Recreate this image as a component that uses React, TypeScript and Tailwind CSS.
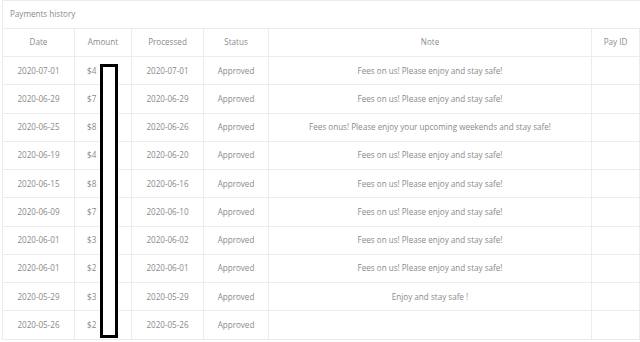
import React from 'react';

const rows = [
  { date: '2020-07-01', amount: '$4', processed: '2020-07-01', note: 'Fees on us! Please enjoy and stay safe!' },
  { date: '2020-06-29', amount: '$7', processed: '2020-06-29', note: 'Fees on us! Please enjoy and stay safe!' },
  { date: '2020-06-25', amount: '$8', processed: '2020-06-26', note: 'Fees onus! Please enjoy your upcoming weekends and stay safe!' },
  { date: '2020-06-19', amount: '$4', processed: '2020-06-20', note: 'Fees on us! Please enjoy and stay safe!' },
  { date: '2020-06-15', amount: '$8', processed: '2020-06-16', note: 'Fees on us! Please enjoy and stay safe!' },
  { date: '2020-06-09', amount: '$7', processed: '2020-06-10', note: 'Fees on us! Please enjoy and stay safe!' },
  { date: '2020-06-01', amount: '$3', processed: '2020-06-02', note: 'Fees on us! Please enjoy and stay safe!' },
  { date: '2020-06-01', amount: '$2', processed: '2020-06-01', note: 'Fees on us! Please enjoy and stay safe!' },
  { date: '2020-05-29', amount: '$3', processed: '2020-05-29', note: 'Enjoy and stay safe !' },
  { date: '2020-05-26', amount: '$2', processed: '2020-05-26', note: '' },
];

const cell = 'border border-[#ececec] text-center align-middle p-0';

export default function App() {
  return (
    <div
      className="relative w-[640px] h-[342px] overflow-hidden bg-white text-[8.1px] text-[#8a8a8a]"
      style={{ fontFamily: '"Open Sans", "Liberation Sans", sans-serif' }}
    >
      <div className="ml-[2px] w-[660px] border-l border-t border-[#ececec]">
        <div className="h-[27px] flex items-center pl-[7px]">Payments history</div>
        <table className="table-fixed border-collapse w-[637px] -ml-px">
          <colgroup>
            <col className="w-[72px]" />
            <col className="w-[57px]" />
            <col className="w-[72px]" />
            <col className="w-[65px]" />
            <col className="w-[323px]" />
            <col className="w-[48px]" />
          </colgroup>
          <thead>
            <tr className="h-[28px]">
              <th className={`${cell} font-normal`}>Date</th>
              <th className={`${cell} font-normal`}>Amount</th>
              <th className={`${cell} font-normal`}>Processed</th>
              <th className={`${cell} font-normal`}>Status</th>
              <th className={`${cell} font-normal`}>Note</th>
              <th className={`${cell} font-normal`}>Pay ID</th>
            </tr>
          </thead>
          <tbody>
            {rows.map((r, i) => (
              <tr key={i} className="h-[28.25px]">
                <td className={cell}>{r.date}</td>
                <td className={`${cell} text-left pl-[12px]`}>{r.amount}</td>
                <td className={cell}>{r.processed}</td>
                <td className={cell}>Approved</td>
                <td className={cell}>{r.note}</td>
                <td className={cell}></td>
              </tr>
            ))}
          </tbody>
        </table>
      </div>
      {/* redaction box over amounts */}
      <div className="absolute left-[100px] top-[64px] w-[18px] h-[274px] border-[3px] border-black bg-white" />
    </div>
  );
}
